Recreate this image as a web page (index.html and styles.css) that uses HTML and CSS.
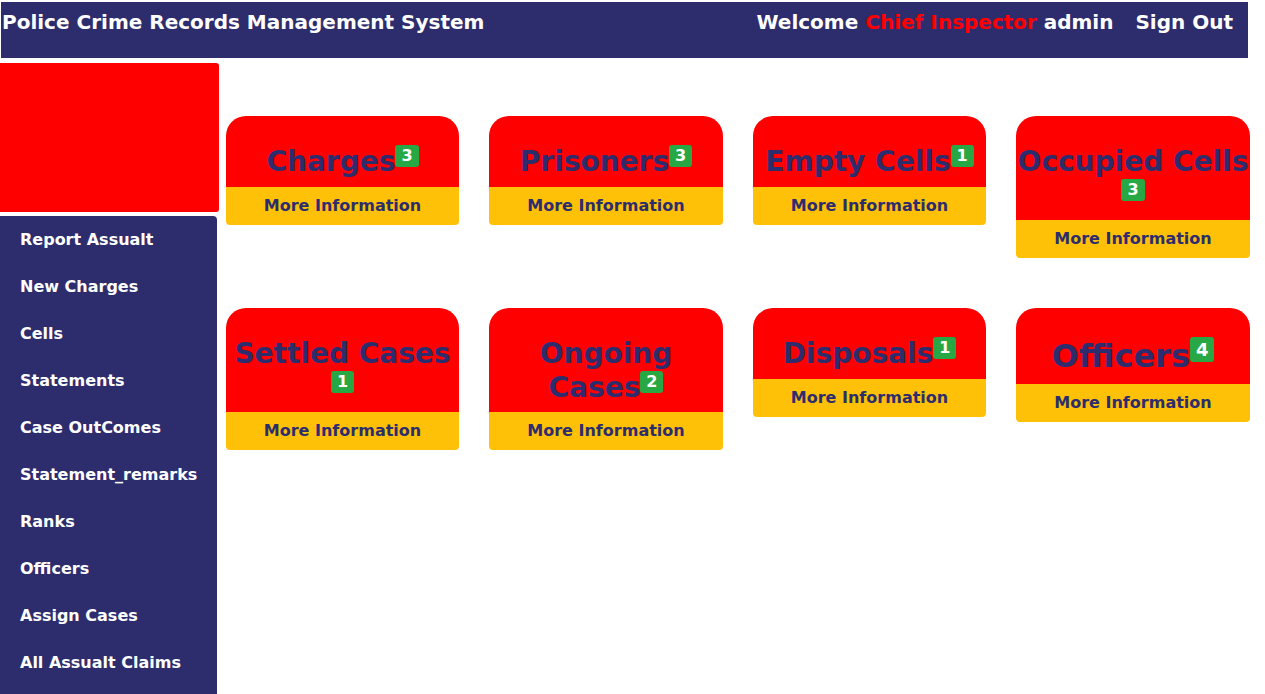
FILE: index.html
```html
<!DOCTYPE html>
<html>
<head>
<meta charset="utf-8">
<title>Police Crime Records Management System</title>
<link rel="stylesheet" href="styles.css">
</head>
<body>
<header class="topbar">
  <div class="brand">Police Crime Records Management System</div>
  <div class="user">
    <span>Welcome <span class="role">Chief Inspector</span> admin</span>
    <a class="signout" href="#">Sign Out</a>
  </div>
</header>
<div class="layout">
  <aside class="side">
    <div class="logo"></div>
    <nav class="menu">
      <a href="#">Report Assualt</a>
      <a href="#">New Charges</a>
      <a href="#">Cells</a>
      <a href="#">Statements</a>
      <a href="#">Case OutComes</a>
      <a href="#">Statement_remarks</a>
      <a href="#">Ranks</a>
      <a href="#">Officers</a>
      <a href="#">Assign Cases</a>
      <a href="#">All Assualt Claims</a>
    </nav>
  </aside>
  <main class="main">
    <div class="grid">
      <div class="card"><div class="card-top"><h3 class="title">Charges<span class="badge">3</span></h3></div><a class="more" href="#">More Information</a></div>
      <div class="card"><div class="card-top"><h3 class="title">Prisoners<span class="badge">3</span></h3></div><a class="more" href="#">More Information</a></div>
      <div class="card"><div class="card-top"><h3 class="title">Empty Cells<span class="badge">1</span></h3></div><a class="more" href="#">More Information</a></div>
      <div class="card"><div class="card-top"><h3 class="title">Occupied Cells<span class="badge">3</span></h3></div><a class="more" href="#">More Information</a></div>
      <div class="card"><div class="card-top"><h3 class="title">Settled Cases<span class="badge">1</span></h3></div><a class="more" href="#">More Information</a></div>
      <div class="card"><div class="card-top"><h3 class="title">Ongoing Cases<span class="badge">2</span></h3></div><a class="more" href="#">More Information</a></div>
      <div class="card"><div class="card-top"><h3 class="title">Disposals<span class="badge">1</span></h3></div><a class="more" href="#">More Information</a></div>
      <div class="card"><div class="card-top"><h2 class="title big">Officers<span class="badge">4</span></h2></div><a class="more" href="#">More Information</a></div>
    </div>
  </main>
</div>
</body>
</html>
```
FILE: styles.css
```css
* { box-sizing: border-box; }
html, body { margin: 0; padding: 0; }
body {
  font-family: "DejaVu Sans", sans-serif;
  font-weight: bold;
  background: #fff;
  color: #2d2d6e;
}
a { text-decoration: none; }

.topbar {
  margin: 2px 17px 0 1px;
  height: 56px;
  background: #2d2d6e;
  color: #fff;
  display: flex;
  justify-content: space-between;
  align-items: flex-start;
  padding: 8px 15px 0 1px;
  font-size: 20px;
  line-height: 24px;
}
.user { display: flex; gap: 22px; }
.role { color: #ff0000; }
.signout { color: #fff; }

.layout { display: flex; align-items: flex-start; }
.side { width: 219px; flex: none; }
.logo {
  margin-top: 5px;
  height: 149px;
  background: #ff0000;
  border-radius: 0 3px 3px 0;
}
.menu {
  margin-top: 4px;
  width: 217px;
  min-height: 480px;
  background: #2d2d6e;
  border-radius: 0 4px 0 0;
  display: flex;
  flex-direction: column;
}
.menu a {
  display: block;
  color: #fff;
  font-size: 16px;
  height: 47px;
  line-height: 47px;
  padding-left: 20px;
}

.main { flex: 1; padding: 58px 15px 0 7px; }
.grid {
  display: grid;
  grid-template-columns: 233fr 234fr 233fr 234fr;
  column-gap: 30px;
  row-gap: 50px;
  align-items: start;
}
.card { display: flex; flex-direction: column; }
.card-top {
  background: #ff0000;
  border-radius: 20px 20px 0 0;
  padding-top: 29px;
  text-align: center;
}
.title {
  margin: 0 0 8px;
  font-size: 28px;
  line-height: 1.2;
  color: #2d2d6e;
}
.title.big { font-size: 32px; }
.badge {
  display: inline-block;
  background: #28a745;
  color: #fff;
  font-size: 16px;
  line-height: 16px;
  padding: 3px 6px;
  border-radius: 3px;
  vertical-align: 10px;
}
.big .badge { font-size: 18px; line-height: 19px; padding: 3px 6px; vertical-align: 11px; }
.more {
  display: block;
  background: #ffc107;
  color: #2d2d6e;
  text-align: center;
  font-size: 16px;
  height: 38px;
  line-height: 38px;
  border-radius: 0 0 4px 4px;
}
```
